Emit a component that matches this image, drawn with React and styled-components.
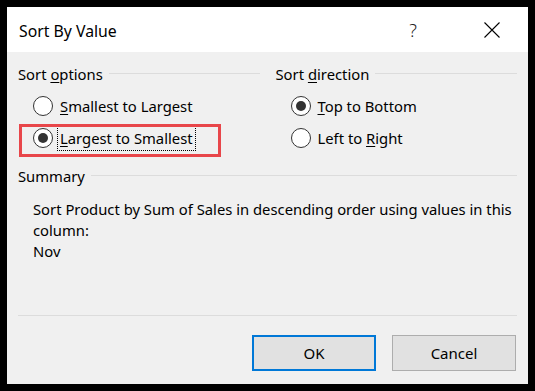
import React from 'react';
import styled, { createGlobalStyle } from 'styled-components';

const Global = createGlobalStyle`
  html, body { margin: 0; padding: 0; background: #000; }
  body { font-family: "Noto Sans", "Open Sans", sans-serif; }
  * { box-sizing: border-box; }
`;

const Frame = styled.div`
  width: 535px;
  height: 391px;
  padding: 7px;
  background: #000;
`;

const Dialog = styled.div`
  width: 521px;
  height: 377px;
  background: #f0f0f0;
  display: flex;
  flex-direction: column;
  color: #000;
  font-size: 14.8px;
`;

const TitleBar = styled.div`
  height: 45px;
  flex: none;
  background: #fff;
  display: flex;
  align-items: center;
  padding: 0 13px 0 12px;
`;

const Title = styled.div`
  flex: 1;
  font-size: 15.8px;
  line-height: 20px;
  padding-top: 2px;
`;

const TitleButton = styled.div`
  width: 46px;
  height: 30px;
  display: flex;
  align-items: center;
  justify-content: center;
  font-size: 18px;
  font-weight: 300;
  color: #222;
  margin-left: ${p => p.$gap || 0}px;
`;

const Body = styled.div`
  flex: 1;
  padding: 13px 11px 0 11px;
  display: flex;
  flex-direction: column;
`;

const Columns = styled.div`
  display: grid;
  grid-template-columns: 1fr 1fr;
  column-gap: 16px;
`;

const GroupHeader = styled.div`
  display: flex;
  align-items: center;
  height: 18px;
  gap: 6px;
  line-height: 18px;
`;

const HeaderLine = styled.div`
  flex: 1;
  height: 1px;
  margin-top: -2px;
  background: #dcdcdc;
`;

const RadioList = styled.div`
  margin-top: 7px;
  display: flex;
  flex-direction: column;
`;

const RadioRow = styled.div`
  position: relative;
  height: 32px;
  display: flex;
  align-items: center;
  padding-left: 15px;
`;

const Circle = styled.span`
  width: 20px;
  height: 20px;
  flex: none;
  border-radius: 50%;
  border: 1.5px solid #333;
  background: #fff;
  display: flex;
  align-items: center;
  justify-content: center;
  &::after {
    content: "";
    width: 10px;
    height: 10px;
    border-radius: 50%;
    background: #333;
    display: ${p => (p.$checked ? 'block' : 'none')};
  }
`;

const Label = styled.span`
  margin-left: 4px;
  padding: 1px 2px 0;
  height: 26px;
  line-height: 23px;
  border: 1px dotted ${p => (p.$focused ? '#000' : 'transparent')};
  white-space: nowrap;
`;

const Highlight = styled.div`
  position: absolute;
  left: 1px;
  top: 2px;
  width: 202px;
  height: 33px;
  border: 3px solid #e8464a;
  pointer-events: none;
`;

const SummaryHeader = styled(GroupHeader)`
  margin-top: 13px;
`;

const SummaryText = styled.div`
  margin-top: 14px;
  padding-left: 15px;
  width: 500px;
  line-height: 21px;
`;

const Footer = styled.div`
  flex: none;
  margin: 0 11px;
  border-top: 1px solid #dcdcdc;
  padding: 19px 1px 13px 0;
  display: flex;
  justify-content: flex-end;
  gap: 16px;
`;

const Button = styled.button`
  width: 124px;
  height: 36px;
  background: #e1e1e1;
  border: ${p => (p.$primary ? '2px solid #0078d7' : '1px solid #adadad')};
  font-family: inherit;
  font-size: 15px;
  color: #000;
  padding: 0;
`;

const U = styled.span`
  text-decoration: underline;
  text-underline-offset: 2px;
`;

function Radio({ checked, focused, children, highlight }) {
  return (
    <RadioRow>
      <Circle $checked={checked} />
      <Label $focused={focused}>{children}</Label>
      {highlight && <Highlight />}
    </RadioRow>
  );
}

function CloseIcon() {
  return (
    <svg width="16" height="16" viewBox="0 0 16 16">
      <path d="M0.5 0.5 L15.5 15.5 M15.5 0.5 L0.5 15.5" stroke="#000" strokeWidth="1.1" fill="none" />
    </svg>
  );
}

export default function App() {
  return (
    <Frame>
      <Global />
      <Dialog>
        <TitleBar>
          <Title>Sort By Value</Title>
          <TitleButton>?</TitleButton>
          <TitleButton $gap={33}><CloseIcon /></TitleButton>
        </TitleBar>
        <Body>
          <Columns>
            <div>
              <GroupHeader>
                <span>Sort <U>o</U>ptions</span>
                <HeaderLine />
              </GroupHeader>
              <RadioList>
                <Radio><U>S</U>mallest to Largest</Radio>
                <Radio checked focused highlight><U>L</U>argest to Smallest</Radio>
              </RadioList>
            </div>
            <div>
              <GroupHeader>
                <span>Sort <U>d</U>irection</span>
                <HeaderLine />
              </GroupHeader>
              <RadioList>
                <Radio checked><U>T</U>op to Bottom</Radio>
                <Radio>Left to <U>R</U>ight</Radio>
              </RadioList>
            </div>
          </Columns>
          <SummaryHeader>
            <span>Summary</span>
            <HeaderLine />
          </SummaryHeader>
          <SummaryText>
            Sort Product by Sum of Sales in descending order using values in this column:
            <br />
            Nov
          </SummaryText>
        </Body>
        <Footer>
          <Button $primary>OK</Button>
          <Button>Cancel</Button>
        </Footer>
      </Dialog>
    </Frame>
  );
}
